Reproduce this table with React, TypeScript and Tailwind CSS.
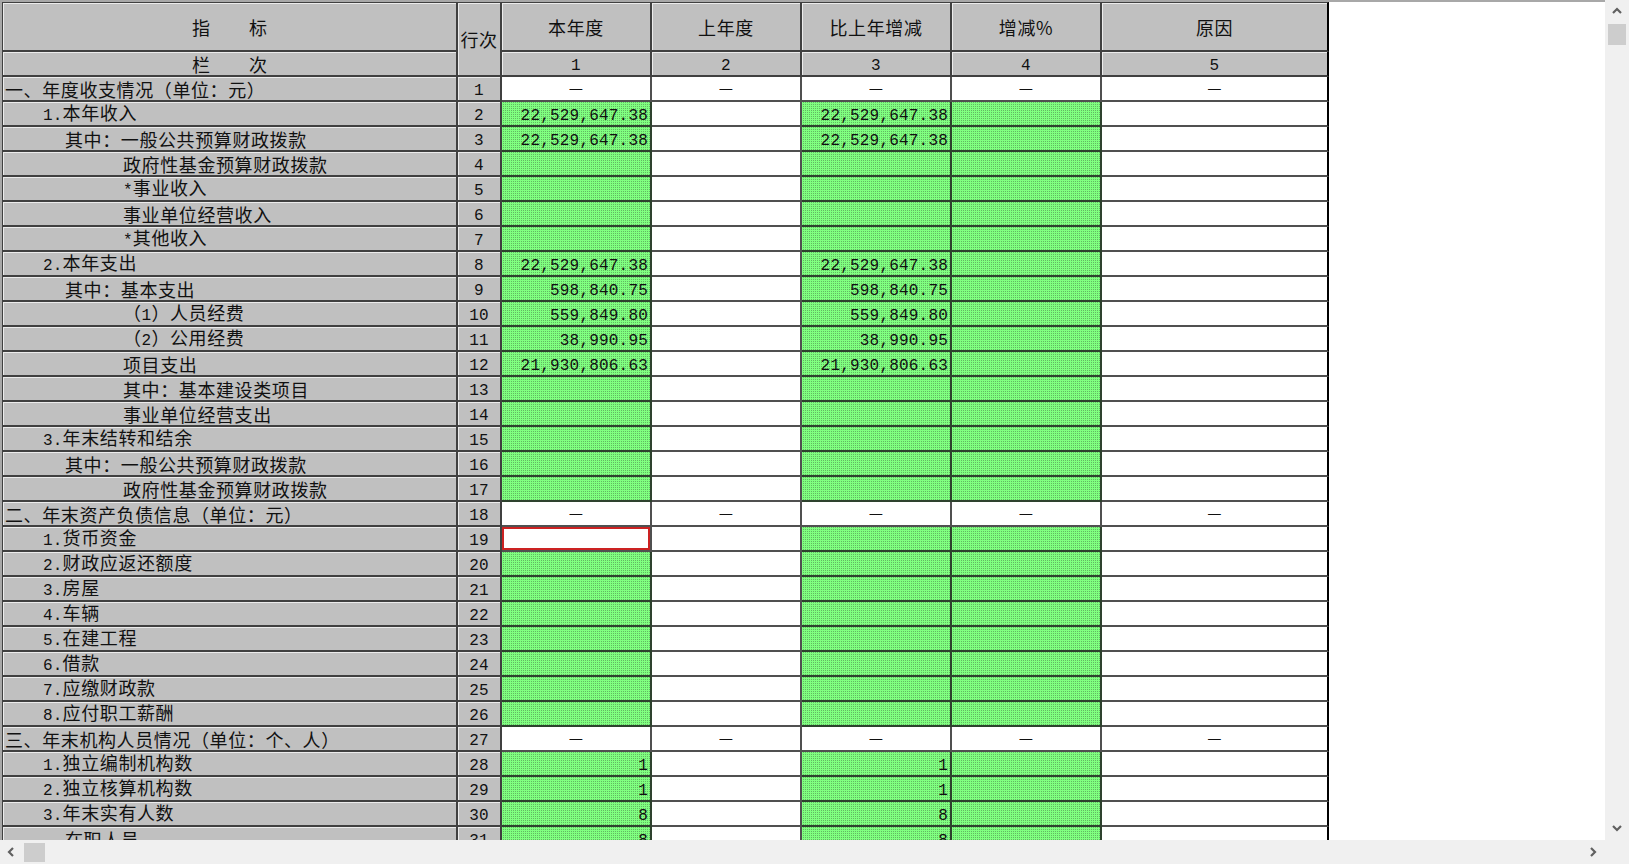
import React from "react";

type R = {
  label: string;
  lvl: 0 | 1 | 2 | 3;
  sec?: boolean;
  v1?: string;
  v3?: string;
  sel?: boolean;
};

const rows: R[] = [
  { label: "一、年度收支情况（单位：元）", lvl: 0, sec: true },
  { label: "1.本年收入", lvl: 1, v1: "22,529,647.38", v3: "22,529,647.38" },
  { label: "其中：一般公共预算财政拨款", lvl: 2, v1: "22,529,647.38", v3: "22,529,647.38" },
  { label: "政府性基金预算财政拨款", lvl: 3 },
  { label: "*事业收入", lvl: 3 },
  { label: "事业单位经营收入", lvl: 3 },
  { label: "*其他收入", lvl: 3 },
  { label: "2.本年支出", lvl: 1, v1: "22,529,647.38", v3: "22,529,647.38" },
  { label: "其中：基本支出", lvl: 2, v1: "598,840.75", v3: "598,840.75" },
  { label: "（1）人员经费", lvl: 3, v1: "559,849.80", v3: "559,849.80" },
  { label: "（2）公用经费", lvl: 3, v1: "38,990.95", v3: "38,990.95" },
  { label: "项目支出", lvl: 3, v1: "21,930,806.63", v3: "21,930,806.63" },
  { label: "其中：基本建设类项目", lvl: 3 },
  { label: "事业单位经营支出", lvl: 3 },
  { label: "3.年末结转和结余", lvl: 1 },
  { label: "其中：一般公共预算财政拨款", lvl: 2 },
  { label: "政府性基金预算财政拨款", lvl: 3 },
  { label: "二、年末资产负债信息（单位：元）", lvl: 0, sec: true },
  { label: "1.货币资金", lvl: 1, sel: true },
  { label: "2.财政应返还额度", lvl: 1 },
  { label: "3.房屋", lvl: 1 },
  { label: "4.车辆", lvl: 1 },
  { label: "5.在建工程", lvl: 1 },
  { label: "6.借款", lvl: 1 },
  { label: "7.应缴财政款", lvl: 1 },
  { label: "8.应付职工薪酬", lvl: 1 },
  { label: "三、年末机构人员情况（单位：个、人）", lvl: 0, sec: true },
  { label: "1.独立编制机构数", lvl: 1, v1: "1", v3: "1" },
  { label: "2.独立核算机构数", lvl: 1, v1: "1", v3: "1" },
  { label: "3.年末实有人数", lvl: 1, v1: "8", v3: "8" },
  { label: "在职人员", lvl: 2, v1: "8", v3: "8" },
];

function T({ s }: { s: string }) {
  const parts = s.split(/([\x20-\x7e]+)/).filter((p) => p.length > 0);
  return (
    <span className="whitespace-nowrap">
      {parts.map((p, i) =>
        /^[\x20-\x7e]+$/.test(p) ? (
          <span key={i} className="font-['Liberation_Mono',monospace] text-[16px] tracking-[0.2px]">
            {p}
          </span>
        ) : (
          <span key={i} className="tracking-[0.6px]">
            {p}
          </span>
        )
      )}
    </span>
  );
}

const gray =
  "bg-[#c0c0c0] border-r-2 border-b-2 border-[#404040] shadow-[inset_1px_1px_0_#ececec] flex items-center";
const white = "bg-white border-r-2 border-b-2 border-[#505050] flex items-center";
const green =
  "bg-[#80ff80] bg-[image:repeating-conic-gradient(#62b862_0_25%,#80ff80_0_100%)] bg-[length:2px_2px] border-r-2 border-b-2 border-[#2e422e] flex items-center";

const indent = ["pl-[2px]", "pl-[40px]", "pl-[62px]", "pl-[120px]"];

function Chev({ d }: { d: "up" | "down" | "left" | "right" }) {
  const paths: Record<string, string> = {
    up: "M2 7 L6 3 L10 7",
    down: "M2 4 L6 8 L10 4",
    left: "M7 2 L3 6 L7 10",
    right: "M4 2 L8 6 L4 10",
  };
  return (
    <svg width="12" height="12" viewBox="0 0 12 12">
      <path d={paths[d]} fill="none" stroke="#606060" strokeWidth="2.2" />
    </svg>
  );
}

export default function App() {
  return (
    <div className="w-[1629px] h-[864px] flex flex-col bg-white text-[#111] text-[18px] leading-[20px] font-['Noto_Sans_CJK_SC',sans-serif] overflow-hidden">
      <div className="flex h-[840px]">
        <div className="flex-1 border-t-2 border-l-2 border-[#a8a8a8] overflow-hidden bg-white">
          <div className="grid grid-cols-[456px_44px_150px_150px_150px_150px_227px] grid-rows-[50px_repeat(32,25px)] w-[1327px]">
            {/* header row 1 */}
            <div className={`${gray} border-t border-l justify-center gap-[39px]`}>
              <span>指</span>
              <span>标</span>
            </div>
            <div className={`${gray} border-t row-span-2 justify-center`}>
              <T s="行次" />
            </div>
            <div className={`${gray} border-t justify-center`}>
              <T s="本年度" />
            </div>
            <div className={`${gray} border-t justify-center`}>
              <T s="上年度" />
            </div>
            <div className={`${gray} border-t justify-center`}>
              <T s="比上年增减" />
            </div>
            <div className={`${gray} border-t justify-center`}>
              <span className="tracking-[0.6px]">增减%</span>
            </div>
            <div className={`${gray} border-t justify-center border-r-black`}>
              <T s="原因" />
            </div>
            {/* header row 2 */}
            <div className={`${gray} border-l justify-center gap-[39px]`}>
              <span>栏</span>
              <span>次</span>
            </div>
            {["1", "2", "3", "4", "5"].map((n, i) => (
              <div key={n} className={`${gray} justify-center ${i === 4 ? "border-r-black" : ""}`}>
                <T s={n} />
              </div>
            ))}
            {/* data rows */}
            {rows.map((r, idx) => {
              const k = idx + 1;
              const cells: React.ReactNode[] = [];
              cells.push(
                <div key={`l${k}`} className={`${gray} border-l ${indent[r.lvl]}`}>
                  <T s={r.label} />
                </div>
              );
              cells.push(
                <div key={`n${k}`} className={`${gray} justify-center`}>
                  <T s={String(k)} />
                </div>
              );
              if (r.sec) {
                for (let c = 0; c < 5; c++) {
                  cells.push(
                    <div
                      key={`s${k}-${c}`}
                      className={`${white} justify-center ${c === 4 ? "border-r-black" : ""}`}
                    >
                      <span className="text-[16px] -mt-[3px]">—</span>
                    </div>
                  );
                }
              } else {
                cells.push(
                  r.sel ? (
                    <div key={`a${k}`} className={`${white} relative`}>
                      <div className="absolute inset-0 border-2 border-[#cc2222]" />
                    </div>
                  ) : (
                    <div key={`a${k}`} className={`${green} justify-end pr-[2px]`}>
                      {r.v1 && <T s={r.v1} />}
                    </div>
                  )
                );
                cells.push(<div key={`b${k}`} className={white} />);
                cells.push(
                  <div key={`c${k}`} className={`${green} justify-end pr-[2px]`}>
                    {r.v3 && <T s={r.v3} />}
                  </div>
                );
                cells.push(<div key={`d${k}`} className={green} />);
                cells.push(<div key={`e${k}`} className={`${white} border-r-black`} />);
              }
              return cells;
            })}
          </div>
        </div>
        {/* vertical scrollbar */}
        <div className="w-[24px] h-full bg-[#f0f0f0] flex flex-col items-center">
          <div className="h-[24px] w-full flex items-center justify-center">
            <Chev d="up" />
          </div>
          <div className="w-[18px] h-[21px] bg-[#cdcdcd]" />
          <div className="flex-1" />
          <div className="h-[24px] w-full flex items-center justify-center">
            <Chev d="down" />
          </div>
        </div>
      </div>
      {/* horizontal scrollbar */}
      <div className="h-[24px] flex bg-[#f0f0f0]">
        <div className="flex-1 flex items-center">
          <div className="w-[24px] h-full flex items-center justify-center">
            <Chev d="left" />
          </div>
          <div className="w-[21px] h-[19px] bg-[#cdcdcd]" />
          <div className="flex-1" />
          <div className="w-[24px] h-full flex items-center justify-center">
            <Chev d="right" />
          </div>
        </div>
        <div className="w-[24px] h-full bg-[#f0f0f0]" />
      </div>
    </div>
  );
}
